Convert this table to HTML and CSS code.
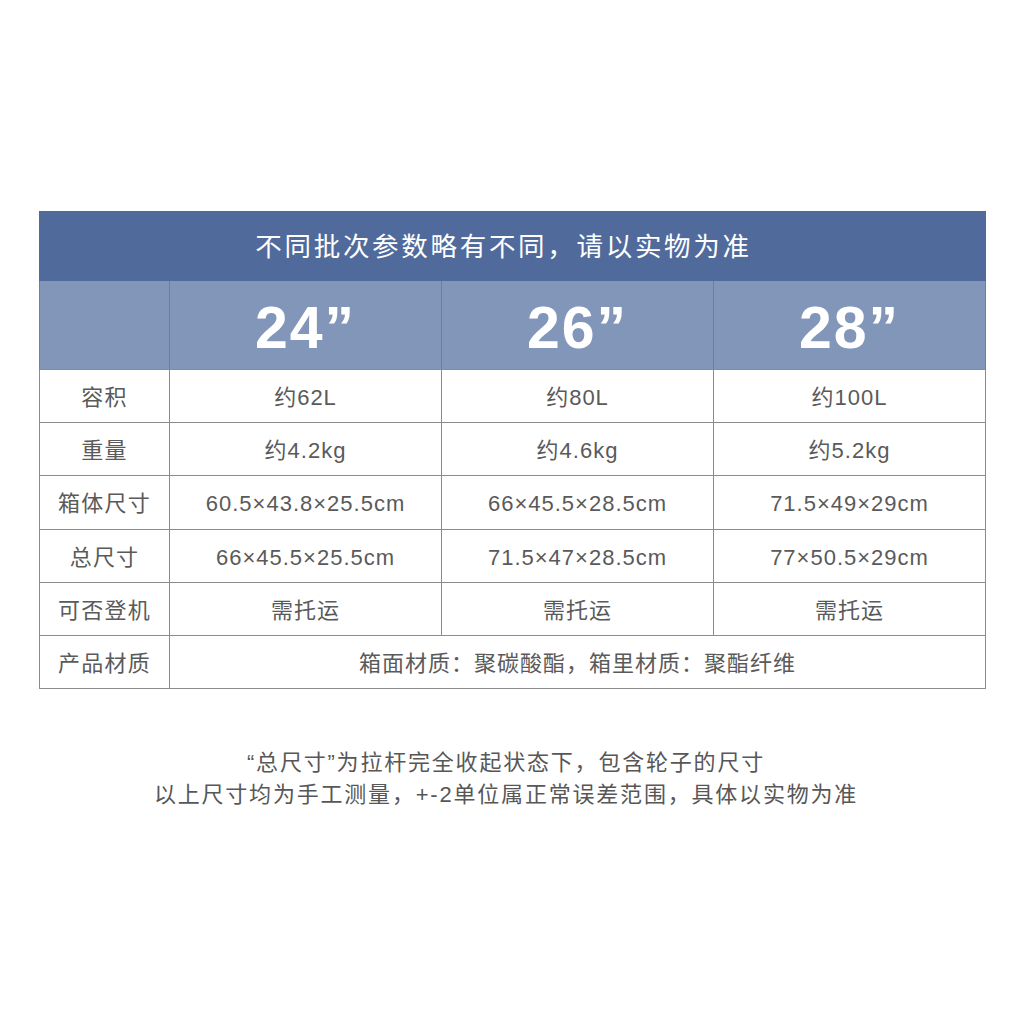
FILE: index.html
```html
<!DOCTYPE html>
<html lang="zh-CN">
<head>
<meta charset="utf-8">
<link rel="stylesheet" href="styles.css">
</head>
<body>
<div class="page">
  <table class="spec">
    <colgroup>
      <col class="c-label">
      <col class="c-size">
      <col class="c-size">
      <col class="c-size">
    </colgroup>
    <thead>
      <tr class="title-row"><th colspan="4">不同批次参数略有不同，请以实物为准</th></tr>
      <tr class="size-row"><th></th><th>24”</th><th>26”</th><th>28”</th></tr>
    </thead>
    <tbody>
      <tr><td class="label">容积</td><td>约62L</td><td>约80L</td><td>约100L</td></tr>
      <tr><td class="label">重量</td><td>约4.2kg</td><td>约4.6kg</td><td>约5.2kg</td></tr>
      <tr><td class="label">箱体尺寸</td><td>60.5×43.8×25.5cm</td><td>66×45.5×28.5cm</td><td>71.5×49×29cm</td></tr>
      <tr><td class="label">总尺寸</td><td>66×45.5×25.5cm</td><td>71.5×47×28.5cm</td><td>77×50.5×29cm</td></tr>
      <tr><td class="label">可否登机</td><td>需托运</td><td>需托运</td><td>需托运</td></tr>
      <tr><td class="label">产品材质</td><td colspan="3">箱面材质：聚碳酸酯，箱里材质：聚酯纤维</td></tr>
    </tbody>
  </table>
  <div class="notes">
    <p>“总尺寸”为拉杆完全收起状态下，包含轮子的尺寸</p>
    <p>以上尺寸均为手工测量，+-2单位属正常误差范围，具体以实物为准</p>
  </div>
</div>
</body>
</html>
```
FILE: styles.css
```css
html, body {
  margin: 0;
  padding: 0;
  background: #ffffff;
}
body {
  font-family: "Liberation Sans", "Noto Sans CJK SC", sans-serif;
  color: #555555;
}
.page {
  padding: 211px 39px 0 39px;
}
.spec {
  width: 946px;
  border-collapse: collapse;
  table-layout: fixed;
}
.c-label { width: 130px; }
.c-size { width: 272px; }
.title-row th {
  height: 66px;
  padding: 0 18px 2px 0;
  background: #506b9b;
  color: #ffffff;
  font-family: "Noto Sans CJK SC", sans-serif;
  font-size: 26.5px;
  line-height: 32px;
  font-weight: 400;
  letter-spacing: 2.7px;
  border: 1.5px solid #506b9b;
}
.size-row th {
  height: 82px;
  padding: 6px 0 0 0;
  background: #8196b9;
  color: #ffffff;
  font-family: "Liberation Sans", Arial, sans-serif;
  font-size: 59px;
  line-height: 66px;
  font-weight: 700;
  letter-spacing: 2px;
  border-left: 1.5px solid #6a7fa3;
  border-right: 1.5px solid #6a7fa3;
  border-bottom: 1.5px solid #7a8db0;
}
.spec td {
  height: 48.2px;
  padding: 4px 0 0 0;
  text-align: center;
  font-size: 22px;
  line-height: 30px;
  letter-spacing: 1px;
  border: 1.5px solid #8c8c8c;
  color: #5a5a5a;
}
.spec td.label {
  letter-spacing: 1.2px;
}
.notes {
  margin-top: 58px;
  text-align: center;
  font-size: 22px;
  line-height: 32px;
  letter-spacing: 1.8px;
  color: #575757;
  padding-right: 12px;
}
.notes p {
  margin: 0;
}
```
